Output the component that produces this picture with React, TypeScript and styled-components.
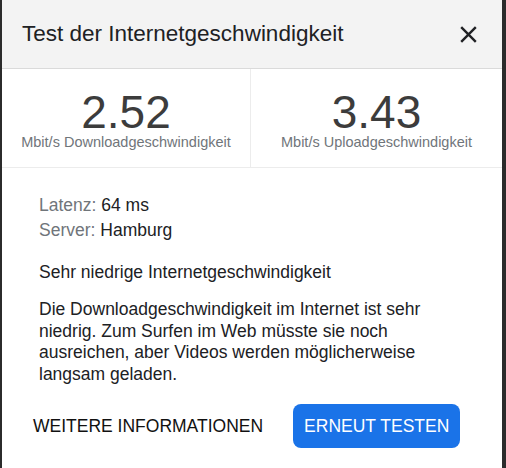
import React from 'react';
import styled, { createGlobalStyle } from 'styled-components';

const Global = createGlobalStyle`
  html, body {
    margin: 0;
    padding: 0;
    background: #2b2b2b;
    font-family: Arial, "Liberation Sans", sans-serif;
  }
`;

const Page = styled.div`
  display: flex;
  padding-left: 2px;
  height: 468px;
  overflow: hidden;
`;

const Dialog = styled.div`
  width: 500px;
  height: 468px;
  background: #fff;
  display: flex;
  flex-direction: column;
`;

const Header = styled.div`
  height: 68px;
  flex-shrink: 0;
  background: #f3f3f3;
  border-bottom: 1px solid #dadada;
  display: flex;
  align-items: center;
  justify-content: space-between;
  padding: 0 25px 0 20px;
`;

const Title = styled.h1`
  margin: 0;
  font-size: 22.5px;
  font-weight: 400;
  color: #202124;
`;

const Close = styled.button`
  background: none;
  border: 0;
  padding: 0;
  width: 17px;
  height: 17px;
  cursor: pointer;
  display: grid;
  place-items: center;
`;

const Stats = styled.div`
  display: grid;
  grid-template-columns: 249px 1fr;
  border-bottom: 1px solid #ececec;
  height: 98px;
  flex-shrink: 0;
`;

const Stat = styled.div<{ $divider?: boolean }>`
  display: flex;
  flex-direction: column;
  align-items: center;
  padding-top: 20px;
  border-right: ${p => (p.$divider ? '1px solid #ececec' : '0')};
`;

const Value = styled.div`
  font-size: 46px;
  line-height: 46px;
  color: #3c3c3c;
`;

const Unit = styled.div`
  font-size: 14.5px;
  line-height: 14px;
  color: #70757a;
`;

const Body = styled.div`
  padding: 25px 43px 0 37px;
  color: #202124;
  font-size: 17.5px;
`;

const Meta = styled.div`
  line-height: 25px;
`;

const Key = styled.span`
  color: #70757a;
`;

const Verdict = styled.p`
  margin: 18px 0 0;
  line-height: 22px;
`;

const Text = styled.p`
  margin: 16px 0 0;
  line-height: 21.5px;
`;

const Actions = styled.div`
  display: flex;
  align-items: center;
  padding: 19px 0 0 31px;
  gap: 30px;
`;

const LinkButton = styled.button`
  background: none;
  border: 0;
  padding: 0;
  font-family: inherit;
  font-size: 17.5px;
  color: #111;
  text-transform: uppercase;
  cursor: pointer;
`;

const Primary = styled.button`
  background: #1a73e8;
  border: 0;
  border-radius: 8px;
  height: 44px;
  padding: 0 11px;
  font-family: inherit;
  font-size: 17.5px;
  color: #fff;
  text-transform: uppercase;
  cursor: pointer;
`;

export default function App() {
  return (
    <>
      <Global />
      <Page>
        <Dialog>
          <Header>
            <Title>Test der Internetgeschwindigkeit</Title>
            <Close aria-label="Schließen">
              <svg width="17" height="17" viewBox="0 0 17 17">
                <path d="M1.2 1.2 L15.8 15.8 M15.8 1.2 L1.2 15.8" stroke="#202124" strokeWidth="2.4" />
              </svg>
            </Close>
          </Header>
          <Stats>
            <Stat $divider>
              <Value>2.52</Value>
              <Unit>Mbit/s Downloadgeschwindigkeit</Unit>
            </Stat>
            <Stat>
              <Value>3.43</Value>
              <Unit>Mbit/s Uploadgeschwindigkeit</Unit>
            </Stat>
          </Stats>
          <Body>
            <Meta>
              <div><Key>Latenz:</Key> 64 ms</div>
              <div><Key>Server:</Key> Hamburg</div>
            </Meta>
            <Verdict>Sehr niedrige Internetgeschwindigkeit</Verdict>
            <Text>
              Die Downloadgeschwindigkeit im Internet ist sehr niedrig. Zum Surfen im Web müsste sie noch
              ausreichen, aber Videos werden möglicherweise langsam geladen.
            </Text>
          </Body>
          <Actions>
            <LinkButton>Weitere Informationen</LinkButton>
            <Primary>Erneut testen</Primary>
          </Actions>
        </Dialog>
      </Page>
    </>
  );
}
